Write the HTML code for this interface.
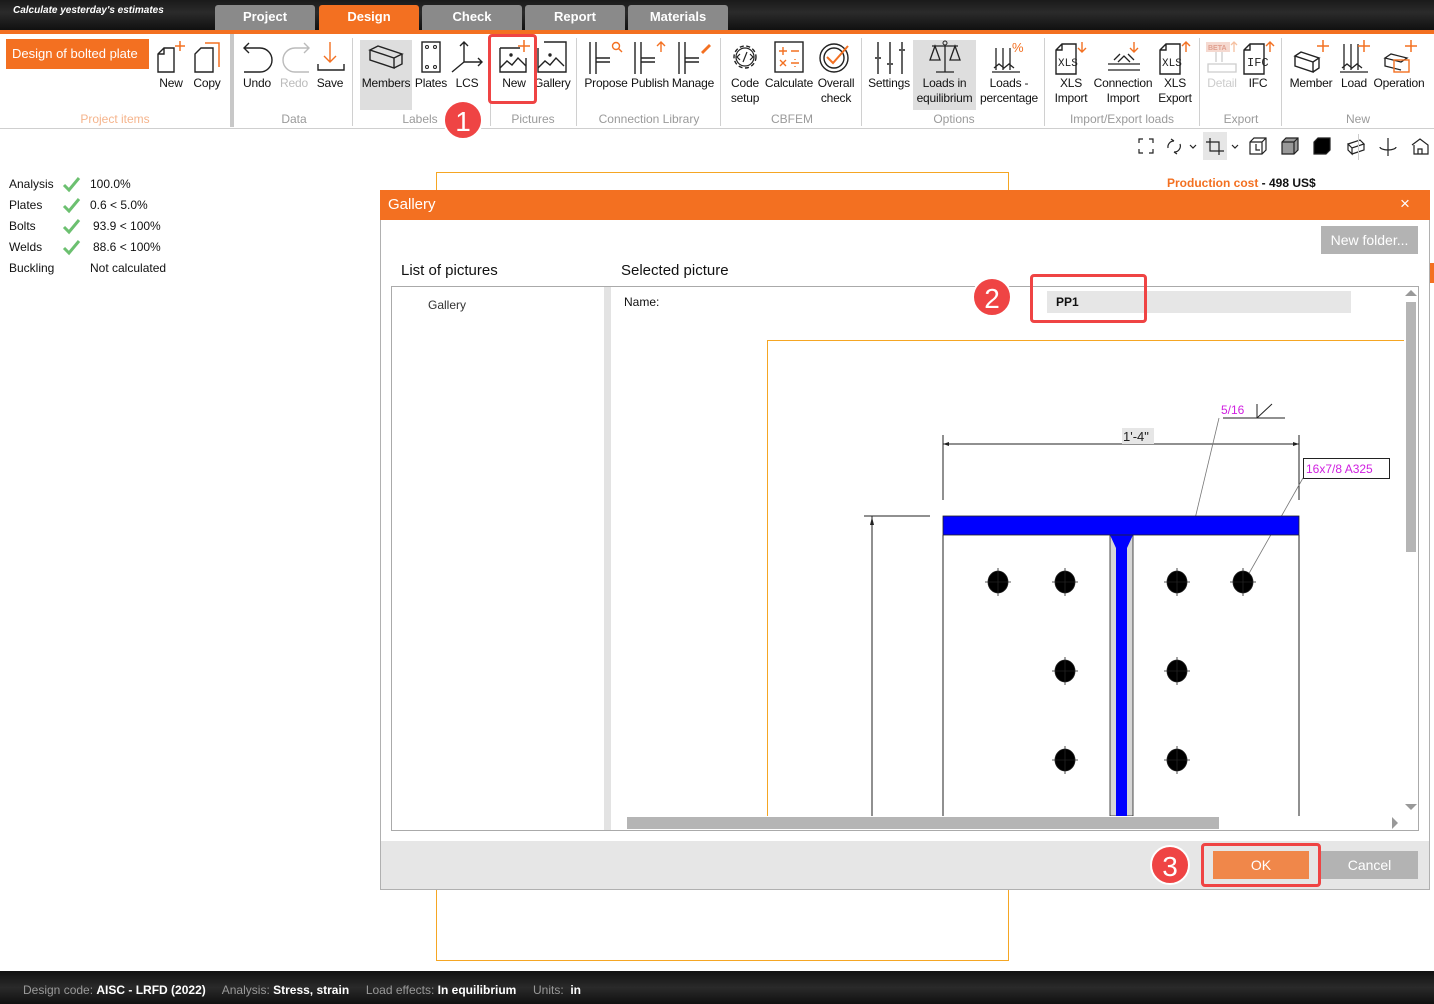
<!DOCTYPE html>
<html><head><meta charset="utf-8">
<style>
*{margin:0;padding:0;box-sizing:border-box}
body{width:1434px;height:1004px;position:relative;overflow:hidden;background:#fff;font-family:"Liberation Sans",sans-serif;color:#111}
.a{position:absolute}
.lbl{position:absolute;font-size:12px;text-align:center;line-height:15px;white-space:nowrap;letter-spacing:-0.2px}
.grp{position:absolute;top:112px;font-size:12px;color:#9a9a9a;text-align:center}
.sep{position:absolute;top:38px;width:1px;height:88px;background:#d0d0d0}
.tab{position:absolute;top:5px;height:25px;background:#8a8a8a;color:#fff;font-weight:bold;font-size:13px;text-align:center;line-height:24px;border-radius:3px 3px 0 0}
svg{position:absolute;overflow:visible}
.badge{position:absolute;width:40px;height:40px;border-radius:50%;background:#ef4444;color:#fff;font-size:28px;text-align:center;line-height:40px;border:2px solid #fff}
.redbox{position:absolute;border:3px solid #ef4444;border-radius:4px}
.res{position:absolute;font-size:12px}
</style></head><body>

<div class="a" style="left:0;top:0;width:1434px;height:31px;background:linear-gradient(#1a1a1a,#2b2b2b 40%,#0f0f0f)"></div>
<div class="a" style="left:13px;top:5px;color:#fff;font-size:10px;font-style:italic;font-weight:bold">Calculate yesterday's estimates</div>
<div class="tab" style="left:215px;width:100px">Project</div>
<div class="tab" style="left:319px;width:100px;background:#f37021">Design</div>
<div class="tab" style="left:422px;width:100px">Check</div>
<div class="tab" style="left:525px;width:100px">Report</div>
<div class="tab" style="left:628px;width:100px">Materials</div>
<div class="a" style="left:0;top:30px;width:1434px;height:4px;background:#f37021"></div>

<div class="a" style="left:0;top:128px;width:1434px;height:1px;background:#cfcfcf"></div>
<div class="a" style="left:6px;top:39px;width:143px;height:30px;background:#f37021;color:#fff;font-size:13px;line-height:30px;padding-left:6px">Design of bolted plate <span style="font-size:8px;margin-left:6px">▼</span></div>
<svg style="left:156px;top:40px" width="32" height="34"><path d="M2 14 L8 8 H18 V32 H2 Z M8 8 V14 H2" fill="none" stroke="#222" stroke-width="1.4"/><path d="M24 1 V11 M19 6 H29" stroke="#f37021" stroke-width="1.5"/></svg>
<svg style="left:193px;top:40px" width="32" height="34"><path d="M2 14 L8 8 H20 V32 H2 Z" fill="none" stroke="#222" stroke-width="1.4"/><path d="M12 3 H26 V27" fill="none" stroke="#f37021" stroke-width="1.5"/></svg>
<div class="lbl" style="left:155px;top:76px;width:32px">New</div>
<div class="lbl" style="left:190px;top:76px;width:34px">Copy</div>
<div class="grp" style="left:60px;width:110px;color:#f5b48c">Project items</div>
<div class="a" style="left:230px;top:34px;width:4px;height:93px;background:#c8c8c8"></div>

<svg style="left:240px;top:42px" width="36" height="30"><path d="M4 6 H20 A12 12 0 0 1 20 30 H4 M9 1 L4 6 L9 11" fill="none" stroke="#222" stroke-width="1.4"/></svg>
<svg style="left:279px;top:42px" width="36" height="30"><path d="M30 6 H16 A12 12 0 0 0 16 30 H30 M25 1 L30 6 L25 11" fill="none" stroke="#bbb" stroke-width="1.4"/></svg>
<svg style="left:316px;top:40px" width="30" height="32"><path d="M14 2 V22 M8 16 L14 22 L20 16" fill="none" stroke="#f37021" stroke-width="1.4"/><path d="M2 24 V30 H28 V24" fill="none" stroke="#222" stroke-width="1.4"/></svg>
<div class="lbl" style="left:240px;top:76px;width:34px">Undo</div>
<div class="lbl" style="left:277px;top:76px;width:34px;color:#bbb">Redo</div>
<div class="lbl" style="left:313px;top:76px;width:34px">Save</div>
<div class="grp" style="left:240px;width:108px">Data</div>
<div class="sep" style="left:352px"></div>

<div class="a" style="left:360px;top:40px;width:52px;height:70px;background:#dedede"></div>
<svg style="left:368px;top:44px" width="36" height="26"><path d="M2 6 L10 2 L34 10 L26 14 Z M2 6 V16 L26 24 V14 M26 24 L34 20 V10" fill="none" stroke="#222" stroke-width="1.4"/></svg>
<svg style="left:420px;top:40px" width="22" height="32"><rect x="2" y="2" width="18" height="30" fill="none" stroke="#222" stroke-width="1.4"/><circle cx="7" cy="7" r="1.5" fill="none" stroke="#222"/><circle cx="15" cy="7" r="1.5" fill="none" stroke="#222"/><circle cx="7" cy="27" r="1.5" fill="none" stroke="#222"/><circle cx="15" cy="27" r="1.5" fill="none" stroke="#222"/></svg>
<svg style="left:450px;top:40px" width="34" height="34"><path d="M14 2 V22 L32 22 M14 22 L2 32 M10 6 L14 2 L18 6 M28 18 L32 22 L28 26" fill="none" stroke="#222" stroke-width="1.4"/></svg>
<div class="lbl" style="left:360px;top:76px;width:52px">Members</div>
<div class="lbl" style="left:414px;top:76px;width:34px">Plates</div>
<div class="lbl" style="left:452px;top:76px;width:30px">LCS</div>
<div class="grp" style="left:390px;width:60px">Labels</div>
<div class="sep" style="left:490px"></div>

<svg style="left:498px;top:40px" width="32" height="32"><path d="M2 8 V32 H28 V18 M22 8 H2" fill="none" stroke="#222" stroke-width="1.4"/><circle cx="13" cy="15" r="1.7" fill="#222"/><path d="M2 28 L9 21 L14 25 L20 18 L28 26" fill="none" stroke="#222" stroke-width="1.4"/><path d="M26 0 V12 M20 6 H32" stroke="#f37021" stroke-width="1.5"/></svg>
<svg style="left:536px;top:40px" width="32" height="34"><path d="M2 8 V32 H30 V2 H8" fill="none" stroke="#222" stroke-width="1.4"/><circle cx="14" cy="15" r="1.7" fill="#222"/><path d="M2 28 L9 21 L14 25 L20 18 L28 26" fill="none" stroke="#222" stroke-width="1.4"/></svg>
<div class="lbl" style="left:496px;top:76px;width:36px">New</div>
<div class="lbl" style="left:534px;top:76px;width:36px">Gallery</div>
<div class="grp" style="left:498px;width:70px">Pictures</div>
<div class="sep" style="left:576px"></div>

<svg style="left:588px;top:40px" width="36" height="34"><path d="M2 2 V34 M8 2 V34 M8 18 H22 M8 22 H22" fill="none" stroke="#222" stroke-width="1.4"/><circle cx="28" cy="6" r="3.5" fill="none" stroke="#f37021" stroke-width="1.4"/><path d="M30.5 8.5 L34 12" stroke="#f37021" stroke-width="1.4"/></svg>
<svg style="left:633px;top:40px" width="36" height="34"><path d="M2 2 V34 M8 2 V34 M8 18 H22 M8 22 H22" fill="none" stroke="#222" stroke-width="1.4"/><path d="M28 12 V2 M24 6 L28 2 L32 6" fill="none" stroke="#f37021" stroke-width="1.4"/></svg>
<svg style="left:677px;top:40px" width="36" height="34"><path d="M2 2 V34 M8 2 V34 M8 18 H22 M8 22 H22" fill="none" stroke="#222" stroke-width="1.4"/><path d="M24 12 L32 4 L34 6 L26 14 Z" fill="#f37021"/></svg>
<div class="lbl" style="left:582px;top:76px;width:48px">Propose</div>
<div class="lbl" style="left:628px;top:76px;width:44px">Publish</div>
<div class="lbl" style="left:670px;top:76px;width:46px">Manage</div>
<div class="grp" style="left:585px;width:128px">Connection Library</div>
<div class="sep" style="left:720px"></div>

<svg style="left:728px;top:40px" width="34" height="34"><circle cx="17" cy="17" r="11" fill="none" stroke="#222" stroke-width="1.4" stroke-dasharray="4 2.6"/><circle cx="17" cy="17" r="9" fill="none" stroke="#222" stroke-width="1.2"/><path d="M12 14 L9 17 L12 20 M22 14 L25 17 L22 20 M19 12 L15 22" fill="none" stroke="#222" stroke-width="1.2"/></svg>
<svg style="left:773px;top:40px" width="32" height="34"><rect x="2" y="2" width="28" height="30" fill="none" stroke="#222" stroke-width="1.4"/><path d="M6 11 H14 M10 7 V15 M18 11 H26 M7 20 L13 26 M13 20 L7 26 M18 23 H26 M22 19 V20 M22 26 V27" stroke="#f37021" stroke-width="1.4"/></svg>
<svg style="left:818px;top:40px" width="36" height="34"><circle cx="16" cy="18" r="14" fill="none" stroke="#222" stroke-width="1.4"/><circle cx="16" cy="18" r="10" fill="none" stroke="#222" stroke-width="1.4"/><path d="M9 17 L15 23 L30 6" fill="none" stroke="#f37021" stroke-width="2"/></svg>
<div class="lbl" style="left:726px;top:76px;width:38px">Code<br>setup</div>
<div class="lbl" style="left:763px;top:76px;width:52px">Calculate</div>
<div class="lbl" style="left:815px;top:76px;width:42px">Overall<br>check</div>
<div class="grp" style="left:740px;width:104px">CBFEM</div>
<div class="sep" style="left:861px"></div>

<svg style="left:874px;top:40px" width="32" height="34"><path d="M4 2 V34 M16 2 V34 M28 2 V34" stroke="#222" stroke-width="1.4"/><path d="M1 18 H7 M13 24 H19 M25 10 H31" stroke="#555" stroke-width="2"/></svg>
<div class="a" style="left:913px;top:40px;width:63px;height:70px;background:#dedede"></div>
<svg style="left:928px;top:40px" width="34" height="34"><circle cx="17" cy="3" r="2" fill="none" stroke="#222"/><path d="M17 5 V32 M8 32 H26 M4 6 H30 M7 6 L2 20 H12 Z M27 6 L22 20 H32 Z" fill="none" stroke="#222" stroke-width="1.3"/></svg>
<svg style="left:992px;top:40px" width="34" height="34"><path d="M4 8 V30 M11 8 V30 M18 8 V30 M0 32 H28 M2 28 L7 24 L12 28 L17 24 L22 28" fill="none" stroke="#222" stroke-width="1.3"/><text x="20" y="12" fill="#f37021" font-size="13" font-family="Liberation Sans">%</text></svg>
<div class="lbl" style="left:868px;top:76px;width:42px">Settings</div>
<div class="lbl" style="left:913px;top:76px;width:63px">Loads in<br>equilibrium</div>
<div class="lbl" style="left:978px;top:76px;width:62px">Loads -<br>percentage</div>
<div class="grp" style="left:900px;width:108px">Options</div>
<div class="sep" style="left:1044px"></div>

<svg style="left:1054px;top:40px" width="34" height="34"><path d="M2 10 L8 4 H22 V34 H2 Z M8 4 V10 H2" fill="none" stroke="#222" stroke-width="1.4"/><text x="4" y="26" font-size="11" font-family="Liberation Mono" fill="#222">XLS</text><path d="M28 2 V12 M24 8 L28 12 L32 8" fill="none" stroke="#f37021" stroke-width="1.4"/></svg>
<svg style="left:1106px;top:40px" width="36" height="34"><path d="M2 24 H34 M2 30 H34 M8 20 L14 14 M28 20 L22 14 M12 22 L18 16 L24 22" fill="none" stroke="#222" stroke-width="1.3"/><path d="M28 2 V12 M24 8 L28 12 L32 8" fill="none" stroke="#f37021" stroke-width="1.4"/></svg>
<svg style="left:1158px;top:40px" width="34" height="34"><path d="M2 10 L8 4 H22 V34 H2 Z M8 4 V10 H2" fill="none" stroke="#222" stroke-width="1.4"/><text x="4" y="26" font-size="11" font-family="Liberation Mono" fill="#222">XLS</text><path d="M28 12 V2 M24 6 L28 2 L32 6" fill="none" stroke="#f37021" stroke-width="1.4"/></svg>
<div class="lbl" style="left:1050px;top:76px;width:42px">XLS<br>Import</div>
<div class="lbl" style="left:1090px;top:76px;width:66px">Connection<br>Import</div>
<div class="lbl" style="left:1154px;top:76px;width:42px">XLS<br>Export</div>
<div class="grp" style="left:1054px;width:136px">Import/Export loads</div>
<div class="sep" style="left:1199px"></div>

<svg style="left:1206px;top:40px" width="34" height="34"><rect x="0" y="2" width="24" height="10" fill="#f5d9d0"/><text x="2" y="10" font-size="7" font-weight="bold" fill="#e0a090" font-family="Liberation Sans">BETA</text><path d="M10 12 V22 M16 12 V22 M2 24 H30 V32 H2 Z" fill="none" stroke="#ccc" stroke-width="1.3"/><path d="M28 12 V2 M25 5 L28 2 L31 5" fill="none" stroke="#f5c0a0" stroke-width="1.3"/></svg>
<svg style="left:1242px;top:40px" width="34" height="34"><path d="M2 10 L8 4 H22 V34 H2 Z M8 4 V10 H2" fill="none" stroke="#222" stroke-width="1.4"/><text x="5" y="26" font-size="12" font-family="Liberation Mono" fill="#222">IFC</text><path d="M28 12 V2 M24 6 L28 2 L32 6" fill="none" stroke="#f37021" stroke-width="1.4"/></svg>
<div class="lbl" style="left:1204px;top:76px;width:36px;color:#ccc">Detail</div>
<div class="lbl" style="left:1242px;top:76px;width:32px">IFC</div>
<div class="grp" style="left:1206px;width:70px">Export</div>
<div class="sep" style="left:1281px"></div>

<svg style="left:1293px;top:40px" width="40" height="34"><path d="M2 16 L8 12 L26 18 L20 22 Z M2 16 V26 L20 32 V22 M20 32 L26 28 V18" fill="none" stroke="#222" stroke-width="1.4"/><path d="M30 0 V12 M24 6 H36" stroke="#f37021" stroke-width="1.5"/></svg>
<svg style="left:1340px;top:40px" width="34" height="34"><path d="M4 4 V30 M11 4 V30 M18 4 V30 M0 32 H28 M2 28 L7 24 L12 28 L17 24 L22 28" fill="none" stroke="#222" stroke-width="1.3"/><path d="M24 0 V12 M18 6 H30" stroke="#f37021" stroke-width="1.5"/></svg>
<svg style="left:1383px;top:40px" width="36" height="34"><path d="M2 18 L8 14 L24 18 L18 22 Z M2 18 V26 L18 30 M2 26" fill="none" stroke="#222" stroke-width="1.3"/><rect x="11" y="20" width="15" height="12" fill="none" stroke="#f37021" stroke-width="1.4"/><path d="M28 0 V12 M22 6 H34" stroke="#f37021" stroke-width="1.5"/></svg>
<div class="lbl" style="left:1287px;top:76px;width:48px">Member</div>
<div class="lbl" style="left:1338px;top:76px;width:32px">Load</div>
<div class="lbl" style="left:1370px;top:76px;width:58px">Operation</div>
<div class="grp" style="left:1300px;width:116px">New</div>

<div class="a" style="left:1203px;top:132px;width:24px;height:28px;background:#e6e6e6"></div>
<svg style="left:1138px;top:138px" width="300" height="18" fill="none" stroke="#222" stroke-width="1.2">
<path d="M1 5 V1 H5 M11 1 H15 V5 M15 11 V15 H11 M5 15 H1 V11"/>
<path d="M30 10 A6 6 0 0 1 36 3 M36 3 L33 1 M42 6 A6 6 0 0 1 36 14 M36 14 L39 16"/>
<path d="M52 7 L55 10 L58 7"/>
<path d="M72 0 V13 H86 M68 4 H81 V17"/>
<path d="M94 7 L97 10 L100 7"/>
<path d="M112 4 L116 0 H128 V12 L124 16 H112 Z M112 4 H124 V16 M124 4 L128 0 M118 6 V12 H122"/>
<path d="M144 4 L148 0 H160 V12 L156 16 H144 Z" fill="#999"/><path d="M144 4 H156 V16 M156 4 L160 0"/>
<path d="M176 4 L180 0 H192 V12 L188 16 H176 Z" fill="#000"/>
<path d="M210 6 L222 2 L226 6 L214 10 Z M210 6 V12 L214 16 V10 M214 16 L226 12 V6"/>
<path d="M250 0 V18 M242 9 A8 3 0 0 0 258 9"/>
<path d="M274 7 L282 1 L290 7 V16 H276 V7 M280 16 V11 H284 V16"/>
</svg>
<div class="a" style="left:1358px;top:134px;width:1px;height:26px;background:#ccc"></div>

<div class="res" style="left:9px;top:177px">Analysis</div>
<div class="res" style="left:9px;top:198px">Plates</div>
<div class="res" style="left:9px;top:219px">Bolts</div>
<div class="res" style="left:9px;top:240px">Welds</div>
<div class="res" style="left:9px;top:261px">Buckling</div>
<svg style="left:63px;top:176px" width="18" height="84" fill="none" stroke="#6cc070" stroke-width="3"><path d="M1 9 L6 14 L16 2"/><path d="M1 30 L6 35 L16 23"/><path d="M1 51 L6 56 L16 44"/><path d="M1 72 L6 77 L16 65"/></svg>
<div class="res" style="left:90px;top:177px">100.0%</div>
<div class="res" style="left:90px;top:198px">0.6 &lt; 5.0%</div>
<div class="res" style="left:93px;top:219px">93.9 &lt; 100%</div>
<div class="res" style="left:93px;top:240px">88.6 &lt; 100%</div>
<div class="res" style="left:90px;top:261px">Not calculated</div>

<div class="a" style="left:436px;top:172px;width:573px;height:789px;border:1px solid #f5a623"></div>
<div class="a" style="left:1167px;top:176px;font-size:12px;font-weight:bold"><span style="color:#f37021">Production cost</span> - 498 US$</div>
<div class="a" style="left:1430px;top:263px;width:4px;height:20px;background:#f37021"></div>

<div class="a" style="left:380px;top:190px;width:1050px;height:700px;background:#fff;border:1px solid #b0b0b0"></div>
<div class="a" style="left:380px;top:190px;width:1050px;height:30px;background:#f37021"></div>
<div class="a" style="left:388px;top:196px;color:#fff;font-size:15px">Gallery</div>
<div class="a" style="left:1400px;top:194px;color:#fff;font-size:17px">×</div>
<div class="a" style="left:1321px;top:226px;width:97px;height:28px;background:#b3b3b3;color:#fff;font-size:14px;line-height:28px;text-align:center">New folder...</div>
<div class="a" style="left:401px;top:262px;font-size:15px">List of pictures</div>
<div class="a" style="left:621px;top:262px;font-size:15px">Selected picture</div>
<div class="a" style="left:391px;top:286px;width:1028px;height:545px;border:1px solid #aaa"></div>
<div class="a" style="left:604px;top:287px;width:7px;height:543px;background:#e3e3e3"></div>
<div class="a" style="left:428px;top:298px;font-size:12px;color:#333">Gallery</div>
<div class="a" style="left:624px;top:295px;font-size:12px">Name:</div>
<div class="a" style="left:1047px;top:291px;width:304px;height:22px;background:#e6e6e6;font-size:12px;font-weight:bold;line-height:22px;padding-left:9px">PP1</div>

<svg style="left:611px;top:287px" width="806" height="530">
<g transform="translate(-611,-287)">
<path d="M767.5 830 V340.5 H1404" fill="none" stroke="#f5a623" stroke-width="1"/>
<path d="M943 435 V500 M1299 435 V500 M943 444 H1299" stroke="#222" stroke-width="1" fill="none"/>
<path d="M943 444 l6 -2 v4 z M1299 444 l-6 -2 v4 z" fill="#222"/>
<rect x="1122" y="428" width="32" height="16" fill="#e6e6e6"/>
<text x="1123" y="441" font-size="13" font-family="Liberation Sans" fill="#222">1'-4"</text>
<text x="1221" y="414" font-size="12" fill="#d020e0" font-family="Liberation Sans">5/16</text>
<path d="M1223 418 H1285 M1257 418 L1272 404 M1257 418 V404" stroke="#222" fill="none"/>
<path d="M1219 418 L1194 523" stroke="#777" stroke-width="0.8"/>
<rect x="1303.5" y="458.5" width="86" height="20" fill="#fff" stroke="#222"/>
<text x="1306" y="473" font-size="12" fill="#d020e0" font-family="Liberation Sans">16x7/8 A325</text>
<path d="M1303 478 L1243 584" stroke="#777" stroke-width="0.8"/>
<path d="M864 516 H930 M872 516 V816" stroke="#222" fill="none"/>
<path d="M872 517 l-2 8 h4 z" fill="#222"/>
<path d="M943 535 V816 M1299 535 V816" stroke="#222"/>
<rect x="1110" y="535" width="23" height="281" fill="#d6d6d6" stroke="#222" stroke-width="0.8"/>
<rect x="1116" y="535" width="11" height="281" fill="#0000ff"/>
<path d="M1110 535 L1116 548 V535 Z M1133 535 L1127 548 V535 Z" fill="#0000ff"/>
<rect x="943" y="516" width="356" height="19" fill="#0000ff" stroke="#222" stroke-width="0.8"/>
<g fill="#000" stroke="#222" stroke-width="0.8">
<ellipse cx="998" cy="582" rx="10" ry="11"/><ellipse cx="1065" cy="582" rx="10" ry="11"/><ellipse cx="1177" cy="582" rx="10" ry="11"/><ellipse cx="1243" cy="582" rx="10" ry="11"/>
<ellipse cx="1065" cy="671" rx="10" ry="11"/><ellipse cx="1177" cy="671" rx="10" ry="11"/>
<ellipse cx="1065" cy="760" rx="10" ry="11"/><ellipse cx="1177" cy="760" rx="10" ry="11"/>
<path d="M985 582 H1011 M998 568 V596 M1052 582 H1078 M1065 568 V596 M1164 582 H1190 M1177 568 V596 M1230 582 H1256 M1243 568 V596 M1052 671 H1078 M1065 657 V685 M1164 671 H1190 M1177 657 V685 M1052 760 H1078 M1065 746 V774 M1164 760 H1190 M1177 746 V774"/>
</g>
</g>
</svg>
<div class="a" style="left:1404px;top:287px;width:14px;height:529px;background:#fff"></div>
<div class="a" style="left:1406px;top:302px;width:10px;height:250px;background:#b5b5b5"></div>
<div class="a" style="left:1405px;top:290px;width:0;height:0;border-left:6px solid transparent;border-right:6px solid transparent;border-bottom:6px solid #999"></div>
<div class="a" style="left:1405px;top:804px;width:0;height:0;border-left:6px solid transparent;border-right:6px solid transparent;border-top:6px solid #999"></div>
<div class="a" style="left:611px;top:816px;width:807px;height:14px;background:#fff"></div>
<div class="a" style="left:627px;top:817px;width:592px;height:12px;background:#b5b5b5"></div>
<div class="a" style="left:1392px;top:817px;width:0;height:0;border-top:6px solid transparent;border-bottom:6px solid transparent;border-left:6px solid #999"></div>

<div class="a" style="left:381px;top:841px;width:1048px;height:48px;background:#e6e6e6"></div>
<div class="a" style="left:1213px;top:851px;width:96px;height:28px;background:#f0874a;color:#fff;font-size:14px;line-height:28px;text-align:center">OK</div>
<div class="a" style="left:1321px;top:851px;width:97px;height:28px;background:#b3b3b3;color:#fff;font-size:14px;line-height:28px;text-align:center">Cancel</div>

<div class="redbox" style="left:488px;top:34px;width:49px;height:70px"></div>
<div class="redbox" style="left:1030px;top:274px;width:117px;height:49px"></div>
<div class="redbox" style="left:1201px;top:843px;width:120px;height:44px"></div>
<div class="badge" style="left:443px;top:100px">1</div>
<div class="badge" style="left:972px;top:277px">2</div>
<div class="badge" style="left:1150px;top:845px">3</div>

<div class="a" style="left:0;top:971px;width:1434px;height:33px;background:linear-gradient(#111,#2a2a2a 50%,#101010)"></div>
<div class="a" style="left:23px;top:983px;font-size:12px;color:#999;white-space:nowrap">Design code: <b style="color:#fff">AISC - LRFD (2022)</b>&nbsp;&nbsp;&nbsp;&nbsp; Analysis: <b style="color:#fff">Stress, strain</b>&nbsp;&nbsp;&nbsp;&nbsp; Load effects: <b style="color:#fff">In equilibrium</b>&nbsp;&nbsp;&nbsp;&nbsp; Units: &nbsp;<b style="color:#fff">in</b></div>
</body></html>
